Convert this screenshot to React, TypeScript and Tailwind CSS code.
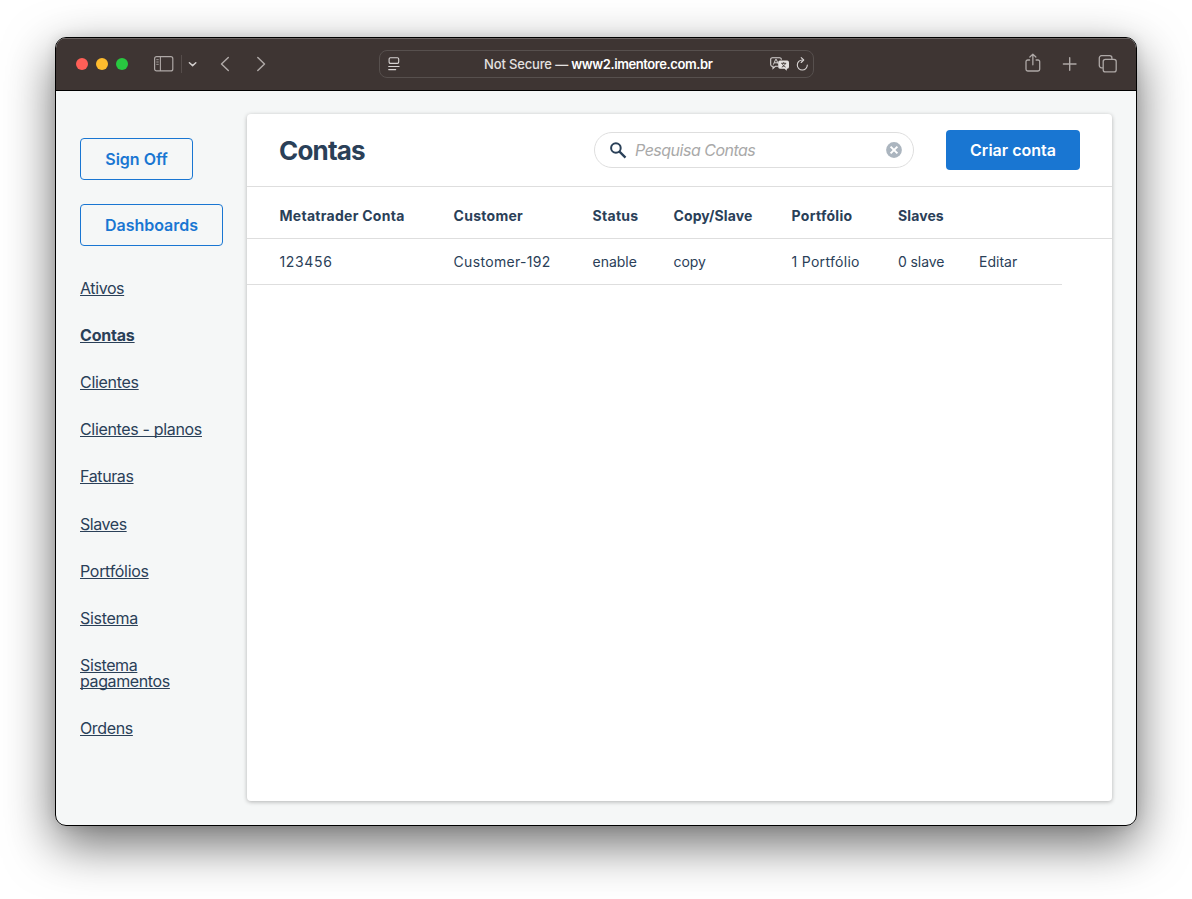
const links = [
    { label: 'Ativos', tracking: 'tracking-[-0.4px]' },
    { label: 'Contas', tracking: 'tracking-[-0.2px]', active: true },
    { label: 'Clientes', tracking: 'tracking-[-0.3px]' },
    { label: 'Clientes - planos', tracking: 'tracking-[-0.33px]' },
    { label: 'Faturas', tracking: 'tracking-[-0.38px]' },
    { label: 'Slaves', tracking: 'tracking-[-0.45px]' },
    { label: 'Portfólios', tracking: 'tracking-[-0.3px]' },
    { label: 'Sistema', tracking: 'tracking-[-0.3px]' },
    { label: 'Sistema pagamentos', tracking: 'tracking-[-0.38px]' },
    { label: 'Ordens', tracking: 'tracking-[-0.36px]' },
];

const columns = [
    { label: 'Metatrader Conta', width: 'w-[206.5px] pl-[32.5px]', tracking: 'tracking-[0.28px]' },
    { label: 'Customer', width: 'w-[139px]', tracking: 'tracking-[0.28px]' },
    { label: 'Status', width: 'w-[81px]', tracking: 'tracking-[0.3px]' },
    { label: 'Copy/Slave', width: 'w-[118px]', tracking: 'tracking-[0.1px]' },
    { label: 'Portfólio', width: 'w-[106.5px]', tracking: 'tracking-[0.3px]' },
    { label: 'Slaves', width: 'w-[81px]', tracking: 'tracking-[0.1px]' },
    { label: '', width: 'w-[83px]', tracking: '' },
];

const accounts = [
    [
        { value: '123456', tracking: 'tracking-[0.65px]' },
        { value: 'Customer-192', tracking: 'tracking-[0.33px]' },
        { value: 'enable', tracking: '' },
        { value: 'copy', tracking: 'tracking-[-0.1px]' },
        { value: '1 Portfólio', tracking: 'tracking-[0.3px]' },
        { value: '0 slave', tracking: 'tracking-[-0.1px]' },
        { value: 'Editar', tracking: '' },
    ],
];

function TitleBar() {
    return (
        <header className="flex h-[53px] items-center border-b border-black bg-[#3e3533] text-[#aea8a6] shadow-[inset_0_1px_0_#6b6361]">
            <div className="flex gap-2 pl-5">
                <span className="size-3 rounded-full bg-[#ff5f57]" />
                <span className="size-3 rounded-full bg-[#febc2e]" />
                <span className="size-3 rounded-full bg-[#28c840]" />
            </div>
            <svg className="-mt-px ml-[26px]" width="20" height="16" viewBox="0 0 20 16" fill="none" stroke="currentColor">
                <rect x="0.6" y="0.7" width="18.2" height="14.2" rx="2" strokeWidth="1.2" />
                <path d="M6.4 0.7v14.2" strokeWidth="1.1" />
                <path d="M2.3 3.7h2.4M2.3 6h2.4M2.3 8.3h2.4" strokeWidth="0.9" />
            </svg>
            <span className="ml-[7px] h-[18px] w-px bg-[#564d4b]" />
            <svg className="ml-1.5" width="10" height="8" viewBox="0 0 10 8" fill="none" stroke="#d3cfce" strokeWidth="1.5" strokeLinecap="round" strokeLinejoin="round">
                <path d="M1.4 2.8L4.6 5.6L7.8 2.8" />
            </svg>
            <svg className="ml-[22px]" width="10" height="16" viewBox="0 0 10 16" fill="none" stroke="currentColor" strokeWidth="1.5" strokeLinecap="round" strokeLinejoin="round">
                <path d="M8.3 1.5L1.5 8l6.800 6.500" />
            </svg>
            <svg className="ml-[26px]" width="10" height="16" viewBox="0 0 10 16" fill="none" stroke="currentColor" strokeWidth="1.5" strokeLinecap="round" strokeLinejoin="round">
                <path d="M1.800 1.500L8.500 8l-6.700 6.500" />
            </svg>
            <div className="ml-[113px] flex h-7 w-[435px] items-center rounded-lg border border-[#57504e] text-[13px] text-[#e4e1e0]">
                <svg className="ml-2" width="12" height="14" viewBox="0 0 12 14" fill="none" stroke="#d8d4d3" strokeLinecap="round">
                    <rect x="1.1" y="0.8" width="9.6" height="5.6" rx="1.3" strokeWidth="1.1" />
                    <path d="M0.7 9.5h10.4M0.7 12.6h7" strokeWidth="1.1" />
                </svg>
                <p className="ml-[84px] w-[228px] whitespace-nowrap pt-0.5 font-medium tracking-[-0.15px]">
                    Not Secure — <span className="font-semibold tracking-[-0.42px] text-white">www2.imentore.com.br</span>
                </p>
                <svg className="ml-[58px]" width="20" height="14" viewBox="0 0 20 14" fill="none">
                    <path d="M8.2 9.3H5.3L3 11.4V9.3H2.4A1.7 1.7 0 0 1 .7 7.6V2.4A1.7 1.7 0 0 1 2.4.7h7.2a1.7 1.7 0 0 1 1.7 1.7v.4" stroke="#d8d4d3" strokeWidth="1.1" />
                    <path d="M3.4 7.6L5.7 2.3h.6l1.9 4.6M4.3 5.8h3.2" stroke="#d8d4d3" strokeWidth="1" />
                    <path d="M10 3.6h7.2a1.8 1.8 0 0 1 1.8 1.8v4.5a1.8 1.8 0 0 1-1.8 1.8h-.4v2l-2.3-2H10a1.8 1.8 0 0 1-1.8-1.8V5.400A1.800 1.800 0 0 1 10 3.600z" fill="#e4e1e0" />
                    <path d="M11.2 6.3h5M13.7 5.2v1.1M12.2 6.5c.5 1.6 1.6 2.8 3.4 3.6M15.3 6.5c-.5 1.6-1.7 2.8-3.5 3.6" stroke="#3e3533" strokeWidth="0.9" />
                </svg>
                <svg className="ml-[6px]" width="13" height="14" viewBox="0 0 13 14" fill="none" stroke="#d8d4d3" strokeWidth="1.1" strokeLinecap="round" strokeLinejoin="round">
                    <path d="M6.3 3A5 5 0 1 0 11.300 8" />
                    <path d="M5.200 0.600L7.700 3L5.200 5.500" />
                </svg>
            </div>
            <svg className="-mt-0.5 ml-[211px]" width="16" height="20" viewBox="0 0 16 20" fill="none" stroke="currentColor" strokeWidth="1.3" strokeLinecap="round" strokeLinejoin="round">
                <path d="M4.6 7H2.7A1.7 1.7 0 0 0 1 8.700v7.600A1.700 1.700 0 0 0 2.700 18h10.300a1.700 1.700 0 0 0 1.700-1.700V8.700A1.700 1.700 0 0 0 13 7h-1.900" />
                <path d="M7.850 11.800V1.300M4.850 4L7.850 1.100L10.850 4" />
            </svg>
            <svg className="-mt-px ml-[21px]" width="16" height="16" viewBox="0 0 16 16" fill="none" stroke="currentColor" strokeWidth="1.4" strokeLinecap="round">
                <path d="M7.700 1.700v12.600M1.400 8h12.600" />
            </svg>
            <svg className="-mt-px ml-5" width="19" height="18" viewBox="0 0 19 18" fill="none" stroke="currentColor" strokeWidth="1.3">
                <path d="M4.9 12.8H3.500A2.200 2.200 0 0 1 1.300 10.600V2.900A2.200 2.200 0 0 1 3.500 .7h8.200a2.200 2.200 0 0 1 2.200 2.200v1.300" />
                <rect x="5.200" y="4.300" width="13" height="12.600" rx="2.200" />
            </svg>
        </header>
    );
}

function Sidebar() {
    return (
        <aside className="flex w-[191px] flex-col items-start pl-6 pt-[47px]">
            <button className="h-[42px] w-[113px] rounded border border-[#1976d2] text-base font-semibold text-[#1976d2]">
                Sign Off
            </button>
            <button className="mt-6 h-[42px] w-[143px] rounded border border-[#1976d2] text-base font-semibold text-[#1976d2]">
                Dashboards
            </button>
            <nav className="mt-[34px] flex w-[130px] flex-col items-start gap-[31.11px] text-base leading-4">
                {links.map((link) => (
                    <a
                        key={link.label}
                        href="#"
                        className={`underline decoration-1 underline-offset-1 [text-decoration-skip-ink:none] ${link.tracking} ${link.active ? 'font-bold' : ''}`}
                    >
                        {link.label}
                    </a>
                ))}
            </nav>
        </aside>
    );
}

function SearchField() {
    return (
        <div className="flex h-9 w-80 items-center rounded-full border border-[#dedede] pl-[15px] pr-[11px]">
            <svg width="17" height="17" viewBox="0 0 17 17" fill="none" stroke="#2a4058">
                <circle cx="5.9" cy="6" r="4.8" strokeWidth="2" />
                <path d="M9.5 9.6L15.5 15.6" strokeWidth="2.3" />
            </svg>
            <span className="ml-2 flex-1 text-base italic tracking-[-0.5px] text-[#a9a9a9]">Pesquisa Contas</span>
            <svg width="16" height="16" viewBox="0 0 16 16" fill="none">
                <circle cx="8" cy="8" r="7.9" fill="#abb5bf" />
                <path d="M4.6 4.6l6.8 6.8M11.4 4.6l-6.8 6.8" stroke="#fff" strokeWidth="2" />
            </svg>
        </div>
    );
}

function AccountsTable() {
    return (
        <div className="text-sm">
            <div className="flex h-[52px] items-center border-b border-[#dedede] pt-[7px] font-bold">
                {columns.map((column, i) => (
                    <span key={i} className={`shrink-0 whitespace-nowrap ${column.width} ${column.tracking}`}>
                        {column.label}
                    </span>
                ))}
            </div>
            {accounts.map((account) => (
                <div key={account[0].value} className="flex h-[46px] w-[815px] items-center border-b border-[#dedede]">
                    {account.map((cell, i) => (
                        <span key={i} className={`shrink-0 whitespace-nowrap ${columns[i].width} ${cell.tracking}`}>
                            {cell.value}
                        </span>
                    ))}
                </div>
            ))}
        </div>
    );
}

export default function App() {
    return (
        <div className="h-[899px] w-[1192px] overflow-hidden bg-white pl-[55px] pt-[37px] font-['Inter',sans-serif] text-[#2a4058]">
            <div className="h-[789px] w-[1082px] rounded-[11px] shadow-[0_18px_50px_rgba(0,0,0,0.58),0_0_12px_rgba(0,0,0,0.1)]">
                <div className="flex h-full flex-col overflow-hidden rounded-[11px] border border-black bg-[#f5f7f7]">
                    <TitleBar />
                    <div className="flex flex-1">
                        <Sidebar />
                        <main className="mt-[23px] h-[687px] w-[865px] rounded bg-white shadow-[0_1px_4px_rgba(0,0,0,0.28)]">
                            <div className="flex h-[73px] items-center border-b border-[#dedede] pl-8">
                                <h1 className="w-[315px] text-[26px] font-bold tracking-[-0.8px]">Contas</h1>
                                <SearchField />
                                <button className="ml-8 h-10 w-[134px] rounded bg-[#1976d2] text-base font-semibold text-white">
                                    Criar conta
                                </button>
                            </div>
                            <AccountsTable />
                        </main>
                    </div>
                </div>
            </div>
        </div>
    );
}
